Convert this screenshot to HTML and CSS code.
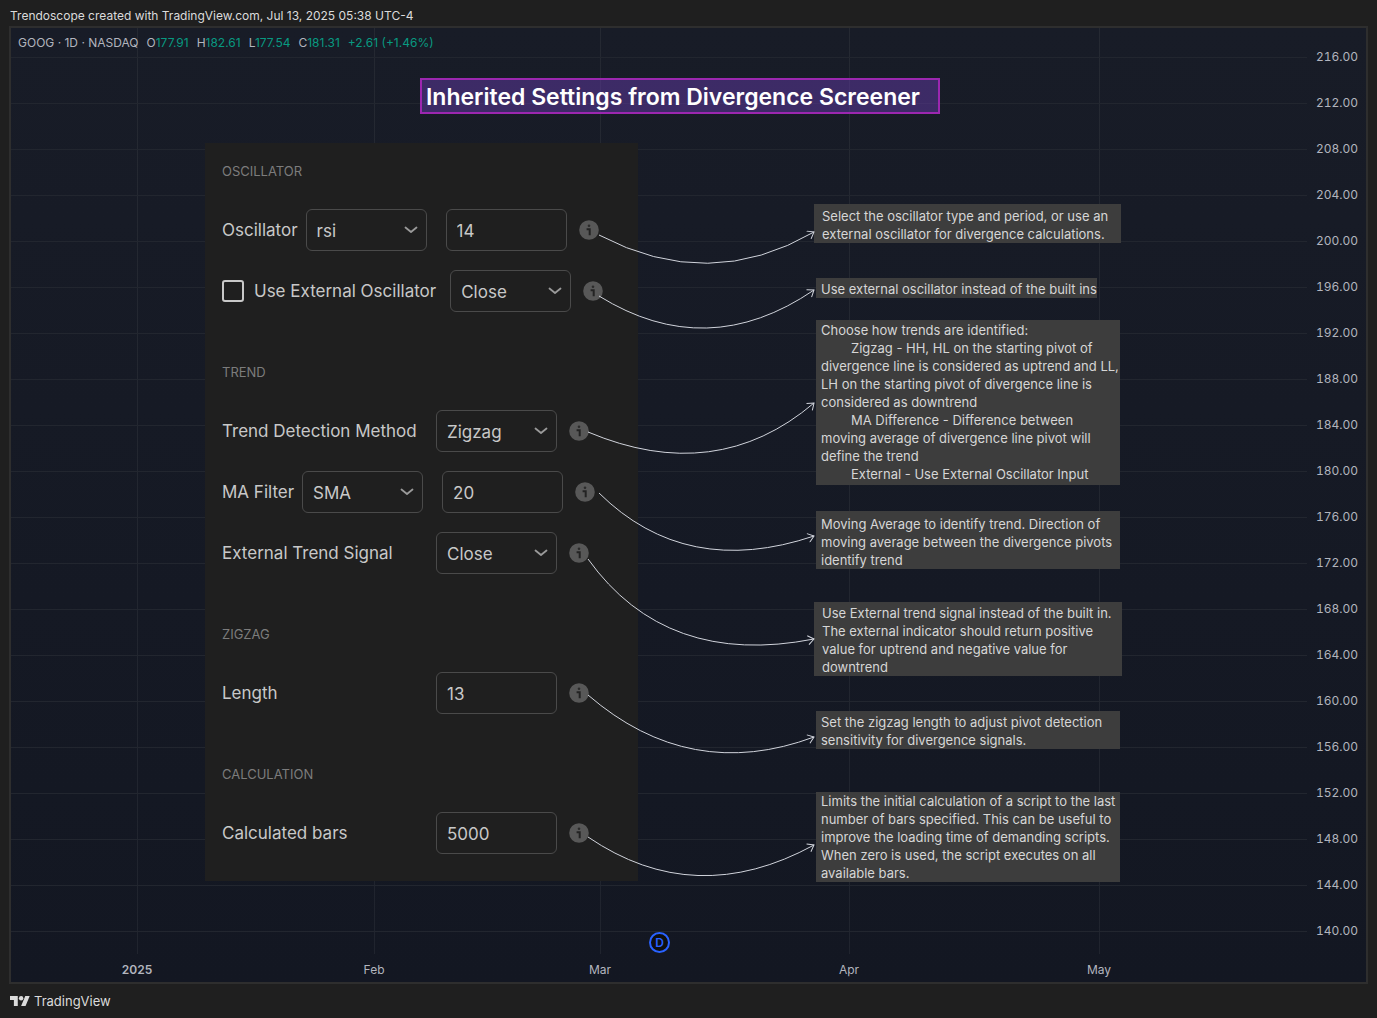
FILE: index.html
```
<!DOCTYPE html>
<html lang="en">
<head>
    <meta charset="UTF-8">
    <meta name="viewport" content="width=device-width, initial-scale=1.0">
    <title>Inherited Settings from Divergence Screener</title>
    <link rel="stylesheet" href="styles.css">
</head>
<body>
    <!-- Shared icons -->
    <svg class="sprite" aria-hidden="true">
        <symbol id="icon-chevron" viewBox="0 0 14 8">
            <path d="M1.5 1.5 L7 6 L12.5 1.5" fill="none" stroke="currentColor" stroke-width="1.8" stroke-linecap="round" stroke-linejoin="round"/>
        </symbol>
        <symbol id="icon-info" viewBox="0 0 20 20">
            <circle cx="10" cy="10" r="9.8" fill="#585858"/>
            <circle cx="10" cy="5.7" r="1.3" fill="#2b2b2b"/>
            <path d="M7.6 9.3 H10.7 V15.2" fill="none" stroke="#232323" stroke-width="2"/>
        </symbol>
    </svg>

    <header class="page-header">Trendoscope created with TradingView.com, Jul 13, 2025 05:38 UTC-4</header>

    <main class="chart">
        <!-- Time axis -->
        <div class="time-axis">
            <div class="time-col"></div>
            <div class="time-col"><span class="time-label year">2025</span></div>
            <div class="time-col"><span class="time-label">Feb</span></div>
            <div class="time-col"><span class="time-label">Mar</span></div>
            <div class="time-col"><span class="time-label">Apr</span></div>
            <div class="time-col"><span class="time-label">May</span></div>
        </div>

        <!-- Price axis -->
        <div class="price-axis">
            <div class="price-row"><span>216.00</span></div>
            <div class="price-row"><span>212.00</span></div>
            <div class="price-row"><span>208.00</span></div>
            <div class="price-row"><span>204.00</span></div>
            <div class="price-row"><span>200.00</span></div>
            <div class="price-row"><span>196.00</span></div>
            <div class="price-row"><span>192.00</span></div>
            <div class="price-row"><span>188.00</span></div>
            <div class="price-row"><span>184.00</span></div>
            <div class="price-row"><span>180.00</span></div>
            <div class="price-row"><span>176.00</span></div>
            <div class="price-row"><span>172.00</span></div>
            <div class="price-row"><span>168.00</span></div>
            <div class="price-row"><span>164.00</span></div>
            <div class="price-row"><span>160.00</span></div>
            <div class="price-row"><span>156.00</span></div>
            <div class="price-row"><span>152.00</span></div>
            <div class="price-row"><span>148.00</span></div>
            <div class="price-row"><span>144.00</span></div>
            <div class="price-row"><span>140.00</span></div>
        </div>

        <!-- Drawings placed on the chart -->
        <div class="drawings">
            <div class="legend">
                <span>GOOG · 1D · NASDAQ</span>
                <span>O<b>177.91</b></span>
                <span>H<b>182.61</b></span>
                <span>L<b>177.54</b></span>
                <span>C<b>181.31</b></span>
                <b>+2.61 (+1.46%)</b>
            </div>

            <h1 class="title">Inherited Settings from Divergence Screener</h1>

            <form class="settings">
                <section class="group">
                    <h2>OSCILLATOR</h2>
                    <div class="row">
                        <label for="oscillator">Oscillator</label>
                        <span class="select">
                            <select id="oscillator"><option>rsi</option></select>
                            <svg><use href="#icon-chevron"/></svg>
                        </span>
                        <input class="field second" type="text" value="14" aria-label="Oscillator period">
                        <button class="info" type="button" aria-label="Oscillator info"><svg><use href="#icon-info"/></svg></button>
                    </div>
                    <div class="row">
                        <input class="check" type="checkbox" id="use-external">
                        <label class="check-label" for="use-external">Use External Oscillator</label>
                        <span class="select">
                            <select aria-label="External oscillator source"><option>Close</option></select>
                            <svg><use href="#icon-chevron"/></svg>
                        </span>
                        <button class="info" type="button" aria-label="External oscillator info"><svg><use href="#icon-info"/></svg></button>
                    </div>
                </section>

                <section class="group">
                    <h2>TREND</h2>
                    <div class="row">
                        <label class="wide" for="trend-method">Trend Detection Method</label>
                        <span class="select">
                            <select id="trend-method"><option>Zigzag</option></select>
                            <svg><use href="#icon-chevron"/></svg>
                        </span>
                        <button class="info" type="button" aria-label="Trend detection info"><svg><use href="#icon-info"/></svg></button>
                    </div>
                    <div class="row">
                        <label for="ma-filter">MA Filter</label>
                        <span class="select">
                            <select id="ma-filter"><option>SMA</option></select>
                            <svg><use href="#icon-chevron"/></svg>
                        </span>
                        <input class="field second" type="text" value="20" aria-label="MA length">
                        <button class="info" type="button" aria-label="MA filter info"><svg><use href="#icon-info"/></svg></button>
                    </div>
                    <div class="row">
                        <label class="wide" for="trend-signal">External Trend Signal</label>
                        <span class="select">
                            <select id="trend-signal"><option>Close</option></select>
                            <svg><use href="#icon-chevron"/></svg>
                        </span>
                        <button class="info" type="button" aria-label="External trend info"><svg><use href="#icon-info"/></svg></button>
                    </div>
                </section>

                <section class="group">
                    <h2>ZIGZAG</h2>
                    <div class="row">
                        <label class="wide" for="length">Length</label>
                        <input class="field" type="text" id="length" value="13">
                        <button class="info" type="button" aria-label="Length info"><svg><use href="#icon-info"/></svg></button>
                    </div>
                </section>

                <section class="group">
                    <h2>CALCULATION</h2>
                    <div class="row">
                        <label class="wide" for="bars">Calculated bars</label>
                        <input class="field" type="text" id="bars" value="5000">
                        <button class="info" type="button" aria-label="Calculated bars info"><svg><use href="#icon-info"/></svg></button>
                    </div>
                </section>
            </form>

            <div class="note note-oscillator">
                <p>Select the oscillator type and period, or use an<br>external oscillator for divergence calculations.</p>
            </div>
            <div class="note note-external">
                <p>Use external oscillator instead of the built ins</p>
            </div>
            <div class="note note-trend">
                <p>Choose how trends are identified:</p>
                <p class="indent">Zigzag - HH, HL on the starting pivot of<br>divergence line is considered as uptrend and LL,<br>LH on the starting pivot of divergence line is<br>considered as downtrend</p>
                <p class="indent">MA Difference - Difference between<br>moving average of divergence line pivot will<br>define the trend</p>
                <p class="indent">External - Use External Oscillator Input</p>
            </div>
            <div class="note note-ma">
                <p>Moving Average to identify trend. Direction of<br>moving average between the divergence pivots<br>identify trend</p>
            </div>
            <div class="note note-signal">
                <p>Use External trend signal instead of the built in.<br>The external indicator should return positive<br>value for uptrend and negative value for<br>downtrend</p>
            </div>
            <div class="note note-length">
                <p>Set the zigzag length to adjust pivot detection<br>sensitivity for divergence signals.</p>
            </div>
            <div class="note note-bars">
                <p>Limits the initial calculation of a script to the last<br>number of bars specified. This can be useful to<br>improve the loading time of demanding scripts.<br>When zero is used, the script executes on all<br>available bars.</p>
            </div>

            <!-- Arrows from the info icons to the notes -->
            <svg class="arrows" aria-hidden="true">
                <defs>
                    <marker id="head" viewBox="0 0 10 10" refX="9" refY="5" markerWidth="10" markerHeight="10" markerUnits="userSpaceOnUse" orient="auto">
                        <path d="M3 0.5 L9 5 L3 9.5" fill="none" stroke="#d1d4dc" stroke-width="1"/>
                    </marker>
                </defs>
                <path d="M588 207 Q698 265 803 204"/>
                <path d="M588 268 Q696 335 803 262"/>
                <path d="M577 404 Q705 458 803 375"/>
                <path d="M588 465 Q675 551 803 508"/>
                <path d="M577 531 Q655 640 803 611"/>
                <path d="M577 667 Q679 755 803 709"/>
                <path d="M577 809 Q684 882 803 817"/>
            </svg>

            <span class="dividend">D</span>
        </div>
    </main>

    <footer class="page-footer">
        <svg class="logo" viewBox="0 4 36 18" aria-hidden="true">
            <path d="M14 22H7V11H0V4h14v18zM28 22h-8l7.5-18h8L28 22z" fill="#dbdbdb"/>
            <circle cx="20" cy="8" r="4" fill="#dbdbdb"/>
        </svg>
        <span>TradingView</span>
    </footer>
</body>
</html>
```
FILE: styles.css
```
* {
    box-sizing: border-box;
}

body {
    margin: 0;
    min-height: 100vh;
    display: flex;
    flex-direction: column;
    font-family: Inter, "Liberation Sans", sans-serif;
    background-color: #1f1f1f;
    color: #dbdbdb;
}

.sprite {
    position: absolute;
    width: 0;
    height: 0;
}

.page-header {
    padding: 6px 10px 0;
    height: 26px;
    font-size: 12px;
    line-height: 20px;
}

.page-footer {
    display: flex;
    align-items: center;
    gap: 4px;
    height: 34px;
    padding: 0 10px;
    font-size: 13px;
}

.logo {
    width: 20px;
    height: 10px;
}

/* Chart */
.chart {
    flex: 1;
    display: grid;
    margin: 0 9px;
    border: 2px solid #2e2e2e;
    background: linear-gradient(#181c27, #131722);
    color: #b2b5be;
    font-size: 12px;
}

.time-axis,
.price-axis,
.drawings {
    grid-area: 1 / 1;
}

.time-axis {
    display: grid;
    grid-template-columns: 126fr 237fr 226fr 249fr 250fr 208fr;
    margin-right: 59px;
}

.time-col {
    display: flex;
    align-items: flex-end;
    background: linear-gradient(#252932, #20242e) left top / 1px calc(100% - 28px) no-repeat;
}

.time-col:first-child {
    background: none;
}

.time-label {
    transform: translateX(-50%);
    height: 28px;
    line-height: 32px;
}

.year {
    font-weight: 600;
}

.price-axis {
    padding: 6px 9px 0 0;
    font-variant-numeric: tabular-nums;
}

.price-row {
    display: flex;
    align-items: center;
    gap: 9px;
    height: 46px;
}

.price-row::before {
    content: '';
    flex: 1;
    height: 1px;
    background-color: #22262f;
}

.price-row span {
    width: 41px;
    line-height: 16px;
    padding-bottom: 1px;
}

/* Drawings */
.drawings {
    position: relative;
}

.legend {
    display: flex;
    gap: 8px;
    padding: 5px 7px;
    line-height: 20px;
}

.legend b {
    font-weight: 400;
    color: #089981;
}

.title {
    position: absolute;
    left: 409px;
    top: 50px;
    width: 520px;
    height: 36px;
    margin: 0;
    padding: 0 4px;
    border: 2px solid #9c27b0;
    background-color: rgba(98, 57, 166, 0.5);
    color: #fff;
    font-size: 23px;
    line-height: 34px;
    font-weight: 600;
    white-space: nowrap;
}

.settings {
    position: absolute;
    left: 194px;
    top: 115px;
    width: 433px;
    padding: 18px 17px 27px;
    background-color: #1f1f1f;
    color: #c8c8c8;
    font-size: 17px;
}

.group + .group {
    margin-top: 50px;
}

.group h2 {
    margin: 0 0 28px;
    color: #7c7c7c;
    font-size: 13px;
    line-height: 20px;
    font-weight: 400;
}

.row {
    display: flex;
    align-items: center;
    height: 42px;
}

.row + .row {
    margin-top: 19px;
}

.row label {
    margin-right: 8px;
    white-space: nowrap;
}

.row .wide {
    width: 214px;
    margin-right: 0;
}

.row .check-label {
    margin-right: 14px;
}

.select {
    position: relative;
}

.select select,
.field {
    display: block;
    width: 121px;
    height: 42px;
    margin: 0;
    padding: 1px 10px 0;
    border: 1px solid #4a4a4a;
    border-radius: 6px;
    background: none;
    color: #c8c8c8;
    font: inherit;
    appearance: none;
}

.select svg {
    position: absolute;
    right: 9px;
    top: 17px;
    width: 14px;
    height: 8px;
    color: #9a9a9a;
    pointer-events: none;
}

.second {
    margin-left: 19px;
}

.check {
    width: 22px;
    height: 22px;
    margin: 0 10px 0 0;
    border: 2px solid #c8c8c8;
    border-radius: 3px;
    appearance: none;
}

.info {
    width: 20px;
    height: 20px;
    margin-left: 12px;
    padding: 0;
    border: none;
    background: none;
}

.info svg {
    display: block;
    width: 20px;
    height: 20px;
}

/* Notes */
.note {
    position: absolute;
    left: 805px;
    width: 304px;
    padding: 2px 5px 0;
    background-color: #3d3d3d;
    color: #d6d6d6;
    font-size: 13px;
    line-height: 18px;
    white-space: nowrap;
}

.note p {
    margin: 0;
}

.note .indent {
    text-indent: 30px;
}

.note-oscillator {
    left: 803px;
    top: 176px;
    width: 307px;
    padding: 3px 8px 0;
}

.note-external {
    top: 250px;
    width: 281px;
}

.note-trend {
    top: 292px;
    padding: 1px 5px 2px;
}

.note-ma {
    top: 483px;
    padding-top: 4px;
}

.note-signal {
    left: 803px;
    top: 574px;
    width: 308px;
    padding: 2px 8px 0;
}

.note-length {
    top: 683px;
}

.note-bars {
    top: 764px;
    padding-top: 0;
}

.arrows {
    position: absolute;
    left: 0;
    top: 0;
    width: 100%;
    height: 100%;
    pointer-events: none;
}

.arrows > path {
    fill: none;
    stroke: #d1d4dc;
    stroke-width: 1;
    marker-end: url(#head);
}

.dividend {
    position: absolute;
    left: 638px;
    top: 904px;
    width: 21px;
    height: 21px;
    border: 2px solid #2962ff;
    border-radius: 50%;
    background-color: #0f0f0f;
    color: #2962ff;
    font-size: 12px;
    line-height: 17px;
    font-weight: 600;
    text-align: center;
}
```
